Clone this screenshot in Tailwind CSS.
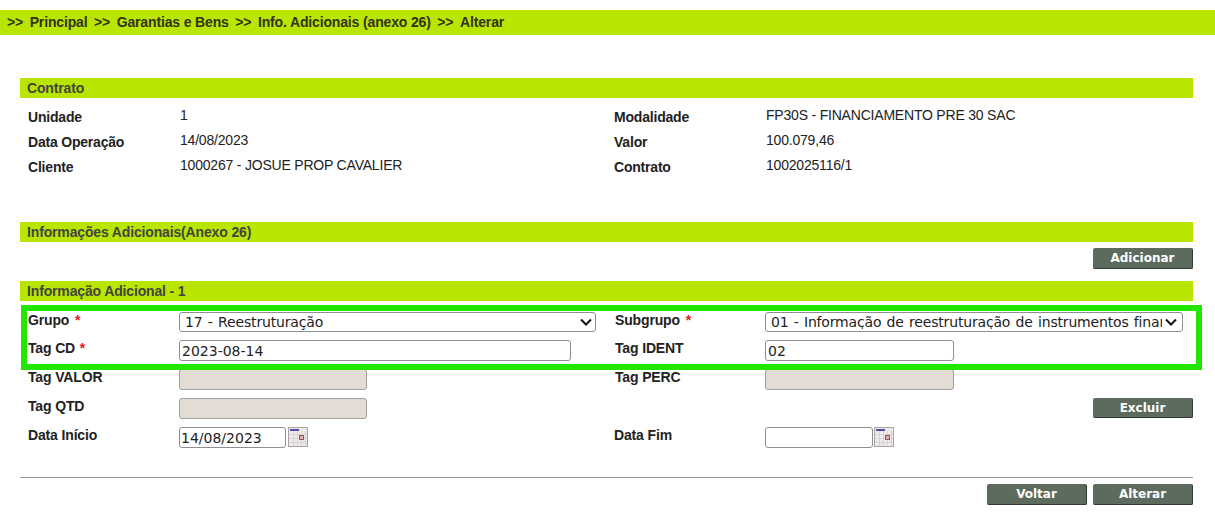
<!DOCTYPE html>
<html lang="pt">
<head>
<meta charset="utf-8">
<script src="https://cdn.jsdelivr.net/npm/@tailwindcss/browser@4"></script>
<title>Alterar</title>
</head>
<body class="bg-white font-['Liberation_Sans',Arial,sans-serif] relative h-[522px] overflow-hidden">
<div class="pt-[10px]">
  <div class="h-[25px] bg-[#b8e600] pl-[7px] pb-[2px] flex items-center gap-[6.6px] text-[14px] tracking-[-0.15px] font-bold text-[#33331f] leading-none">
    <span>&gt;&gt;</span><span>Principal</span><span>&gt;&gt;</span><span>Garantias e Bens</span><span>&gt;&gt;</span><span>Info. Adicionais (anexo 26)</span><span>&gt;&gt;</span><span>Alterar</span>
  </div>
</div>
<main class="ml-[20px] w-[1173px] pt-[43px]">
  <h2 class="h-[20px] bg-[#b8e600] pl-[7px] flex items-center text-[14px] tracking-[-0.15px] font-bold text-[#444] leading-none">Contrato</h2>
  <section class="pt-[6px] grid grid-cols-[152px_434px_152px_1fr] auto-rows-[25px] pl-[8px] text-[14px] tracking-[-0.2px] leading-[24px] text-[#222]">
    <div class="font-bold pt-[1px]">Unidade</div><div class="-mt-[1px]">1</div><div class="font-bold pt-[1px]">Modalidade</div><div class="-mt-[1px]">FP30S - FINANCIAMENTO PRE 30 SAC</div>
    <div class="font-bold pt-[1px]">Data Operação</div><div class="-mt-[1px]">14/08/2023</div><div class="font-bold pt-[1px]">Valor</div><div class="-mt-[1px]">100.079,46</div>
    <div class="font-bold pt-[1px]">Cliente</div><div class="-mt-[1px]">1000267 - JOSUE PROP CAVALIER</div><div class="font-bold pt-[1px]">Contrato</div><div class="-mt-[1px]">1002025116/1</div>
  </section>
  <h2 class="mt-[43px] h-[20px] bg-[#b8e600] pl-[7px] flex items-center text-[14px] tracking-[-0.15px] font-bold text-[#444] leading-none">Informações Adicionais(Anexo 26)</h2>
  <div class="mt-[6px] h-[21px] flex justify-end">
    <button class="w-[100px] h-[21px] rounded-[2px] bg-[#5c6b5e] border-b border-r border-[#2f3a31] text-white font-['DejaVu_Sans',sans-serif] font-bold text-[12px] leading-none">Adicionar</button>
  </div>
  <h2 class="mt-[12px] h-[20px] bg-[#b8e600] pl-[7px] flex items-center text-[14px] tracking-[-0.15px] font-bold text-[#444] leading-none">Informação Adicional - 1</h2>
  <section class="pt-[11px] pl-[8px] text-[14px] text-[#222] font-['DejaVu_Sans',sans-serif]">
    <div class="h-[28px] flex items-start">
      <label class="w-[151px] -mt-[1px] font-['Liberation_Sans',sans-serif] tracking-[-0.15px] font-bold leading-[18px]">Grupo <span class="text-[#e02020] ml-[2px]">*</span></label>
      <div class="w-[417px] h-[20px] border border-[#8f8f8f] rounded-[3px] bg-white flex items-center pl-[5px] pr-[3px] leading-none overflow-hidden tracking-[-0.15px] [word-spacing:1px]"><span class="flex-1">17 - Reestruturação</span>
        <svg class="w-[12px] h-[8px]" viewBox="0 0 12 8"><path d="M1 1.5 6 6.5 11 1.5" fill="none" stroke="#111" stroke-width="2"/></svg></div>
      <label class="ml-[19px] w-[150px] -mt-[1px] font-['Liberation_Sans',sans-serif] tracking-[-0.15px] font-bold leading-[18px]">Subgrupo <span class="text-[#e02020] ml-[2px]">*</span></label>
      <div class="w-[418px] h-[20px] border border-[#8f8f8f] rounded-[3px] bg-white flex items-center pl-[5px] pr-[3px] leading-none overflow-hidden tracking-[-0.17px] [word-spacing:1px]"><span class="w-[391px] overflow-hidden whitespace-nowrap">01 - Informação de reestruturação de instrumentos financeiros</span>
        <svg class="w-[12px] h-[8px] ml-[3px] shrink-0" viewBox="0 0 12 8"><path d="M1 1.5 6 6.5 11 1.5" fill="none" stroke="#111" stroke-width="2"/></svg></div>
    </div>
    <div class="h-[29px] flex items-start">
      <label class="w-[151px] -mt-[1px] font-['Liberation_Sans',sans-serif] tracking-[-0.15px] font-bold leading-[18px]">Tag CD <span class="text-[#e02020] ml-[1px]">*</span></label>
      <div class="w-[392px] h-[21px] border border-[#8f8f8f] rounded-[3px] bg-white flex items-center pl-[2px] leading-none">2023-08-14</div>
      <label class="ml-[44px] w-[150px] -mt-[1px] font-['Liberation_Sans',sans-serif] tracking-[-0.15px] font-bold leading-[18px]">Tag IDENT</label>
      <div class="w-[189px] h-[21px] border border-[#8f8f8f] rounded-[3px] bg-white flex items-center pl-[2px] leading-none">02</div>
    </div>
    <div class="h-[29px] flex items-start">
      <label class="w-[151px] -mt-[1px] font-['Liberation_Sans',sans-serif] tracking-[-0.15px] font-bold leading-[18px]">Tag VALOR</label>
      <div class="w-[188px] h-[21px] border border-[#a0a0a0] rounded-[3px] bg-[#e3dcd4]"></div>
      <label class="ml-[248px] w-[150px] -mt-[1px] font-['Liberation_Sans',sans-serif] tracking-[-0.15px] font-bold leading-[18px]">Tag PERC</label>
      <div class="w-[189px] h-[21px] border border-[#a0a0a0] rounded-[3px] bg-[#e3dcd4]"></div>
    </div>
    <div class="h-[29px] flex items-start">
      <label class="w-[151px] -mt-[1px] font-['Liberation_Sans',sans-serif] tracking-[-0.15px] font-bold leading-[18px]">Tag QTD</label>
      <div class="w-[188px] h-[21px] border border-[#a0a0a0] rounded-[3px] bg-[#e3dcd4]"></div>
      <button class="ml-auto w-[100px] h-[20px] rounded-[2px] bg-[#5c6b5e] border-b border-r border-[#2f3a31] text-white font-bold text-[12px] leading-none">Excluir</button>
    </div>
    <div class="h-[29px] flex items-start">
      <label class="w-[151px] -mt-[1px] font-['Liberation_Sans',sans-serif] tracking-[-0.15px] font-bold leading-[18px]">Data Início</label>
      <div class="w-[107px] h-[21px] border border-[#8f8f8f] rounded-[3px] bg-white flex items-center pl-[1px] leading-none text-[14px]">14/08/2023</div>
      <svg class="ml-[2px] w-[20px] h-[20px]" viewBox="0 0 20 20"><rect width="20" height="20" fill="#a8a4a4"/><rect x="1" y="1" width="18" height="18" fill="#eeeaea"/><rect x="2" y="2" width="9" height="2" fill="#4a4fa8"/><path d="M1 7.5H19M1 11.5H19M1 15.5H19M5.5 4V19M9.5 4V19M13.5 4V19M17.5 4V19" stroke="#d8d4d4"/><rect x="11.5" y="8.5" width="4" height="4" fill="#d8b0b0" stroke="#a85050"/></svg>
      <label class="ml-[306px] w-[151px] -mt-[1px] font-['Liberation_Sans',sans-serif] tracking-[-0.15px] font-bold leading-[18px]">Data Fim</label>
      <div class="w-[108px] h-[21px] border border-[#8f8f8f] rounded-[3px] bg-white"></div>
      <svg class="ml-[1px] w-[20px] h-[20px]" viewBox="0 0 20 20"><rect width="20" height="20" fill="#a8a4a4"/><rect x="1" y="1" width="18" height="18" fill="#eeeaea"/><rect x="2" y="2" width="9" height="2" fill="#4a4fa8"/><path d="M1 7.5H19M1 11.5H19M1 15.5H19M5.5 4V19M9.5 4V19M13.5 4V19M17.5 4V19" stroke="#d8d4d4"/><rect x="11.5" y="8.5" width="4" height="4" fill="#d8b0b0" stroke="#a85050"/></svg>
    </div>
  </section>
  <div class="mt-[21px] border-t border-[#9a9a9a] pt-[6px] flex justify-end gap-[6px]">
    <button class="w-[100px] h-[21px] rounded-[2px] bg-[#5c6b5e] border-b border-r border-[#2f3a31] text-white font-['DejaVu_Sans',sans-serif] font-bold text-[12px] leading-none">Voltar</button>
    <button class="w-[100px] h-[21px] rounded-[2px] bg-[#5c6b5e] border-b border-r border-[#2f3a31] text-white font-['DejaVu_Sans',sans-serif] font-bold text-[12px] leading-none">Alterar</button>
  </div>
</main>
<div class="absolute left-[21px] top-[305px] w-[1181px] h-[65px] border-[6px] border-[#22e600] pointer-events-none"></div>
</body>
</html>
